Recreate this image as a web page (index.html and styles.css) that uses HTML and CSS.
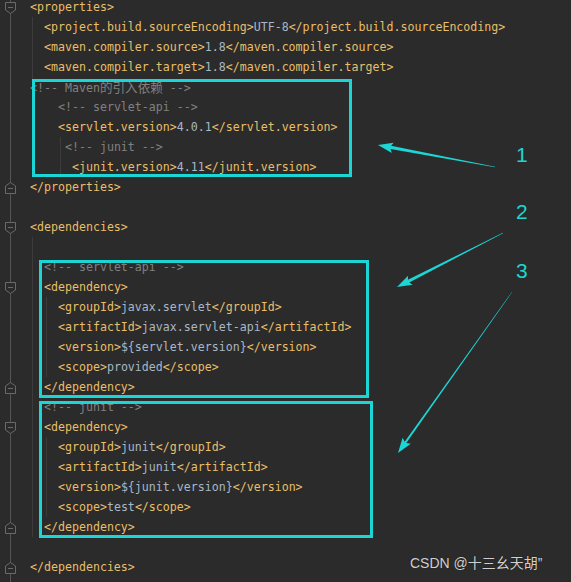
FILE: index.html
```html
<!DOCTYPE html>
<html>
<head>
<meta charset="utf-8">
<link rel="stylesheet" href="styles.css">
</head>
<body>
<div class="editor">
  <div class="row"><span class="gut"><svg class="fold" viewBox="0 0 11 12"><path d="M0.5 0.5H10.5V8L5.5 11.5L0.5 8Z"/><path d="M3 5.5H8"/></svg></span><span class="line"><span class="t">&lt;properties&gt;</span></span></div>
  <div class="block g32">
    <div class="row"><span class="gut"></span><span class="line">  <span class="t">&lt;project.build.sourceEncoding&gt;</span><span class="v">UTF-8</span><span class="t">&lt;/project.build.sourceEncoding&gt;</span></span></div>
    <div class="row"><span class="gut"></span><span class="line">  <span class="t">&lt;maven.compiler.source&gt;</span><span class="v">1.8</span><span class="t">&lt;/maven.compiler.source&gt;</span></span></div>
    <div class="row"><span class="gut"></span><span class="line">  <span class="t">&lt;maven.compiler.target&gt;</span><span class="v">1.8</span><span class="t">&lt;/maven.compiler.target&gt;</span></span></div>
    <div class="row"><span class="gut"></span><span class="line"><span class="c">&lt;!-- Maven<span class="cjk">的引入依赖</span> --&gt;</span></span></div>
    <div class="row"><span class="gut"></span><span class="line">    <span class="c">&lt;!-- servlet-api --&gt;</span></span></div>
    <div class="row"><span class="gut"></span><span class="line">    <span class="t">&lt;servlet.version&gt;</span><span class="v">4.0.1</span><span class="t">&lt;/servlet.version&gt;</span></span></div>
    <div class="block g60">
      <div class="row"><span class="gut"></span><span class="line">     <span class="c">&lt;!-- junit --&gt;</span></span></div>
      <div class="row"><span class="gut"></span><span class="line">      <span class="t">&lt;junit.version&gt;</span><span class="v">4.11</span><span class="t">&lt;/junit.version&gt;</span></span></div>
    </div>
  </div>
  <div class="row"><span class="gut"><svg class="fold" viewBox="0 0 11 12"><path d="M0.5 11.5H10.5V4L5.5 0.5L0.5 4Z"/><path d="M3 6.5H8"/></svg></span><span class="line"><span class="t">&lt;/properties&gt;</span></span></div>
  <div class="row"><span class="gut"></span><span class="line"></span></div>
  <div class="row"><span class="gut"><svg class="fold" viewBox="0 0 11 12"><path d="M0.5 0.5H10.5V8L5.5 11.5L0.5 8Z"/><path d="M3 5.5H8"/></svg></span><span class="line"><span class="t">&lt;dependencies&gt;</span></span></div>
  <div class="block g32">
    <div class="row"><span class="gut"></span><span class="line"></span></div>
    <div class="row"><span class="gut"></span><span class="line">  <span class="c">&lt;!-- servlet-api --&gt;</span></span></div>
    <div class="row"><span class="gut"><svg class="fold" viewBox="0 0 11 12"><path d="M0.5 0.5H10.5V8L5.5 11.5L0.5 8Z"/><path d="M3 5.5H8"/></svg></span><span class="line">  <span class="t">&lt;dependency&gt;</span></span></div>
    <div class="block g46">
      <div class="row"><span class="gut"></span><span class="line">    <span class="t">&lt;groupId&gt;</span><span class="v">javax.servlet</span><span class="t">&lt;/groupId&gt;</span></span></div>
      <div class="row"><span class="gut"></span><span class="line">    <span class="t">&lt;artifactId&gt;</span><span class="v">javax.servlet-api</span><span class="t">&lt;/artifactId&gt;</span></span></div>
      <div class="row"><span class="gut"></span><span class="line">    <span class="t">&lt;version&gt;</span><span class="v">${servlet.version}</span><span class="t">&lt;/version&gt;</span></span></div>
      <div class="row"><span class="gut"></span><span class="line">    <span class="t">&lt;scope&gt;</span><span class="v">provided</span><span class="t">&lt;/scope&gt;</span></span></div>
    </div>
    <div class="row"><span class="gut"><svg class="fold" viewBox="0 0 11 12"><path d="M0.5 11.5H10.5V4L5.5 0.5L0.5 4Z"/><path d="M3 6.5H8"/></svg></span><span class="line">  <span class="t">&lt;/dependency&gt;</span></span></div>
    <div class="row"><span class="gut"></span><span class="line">  <span class="c">&lt;!-- junit --&gt;</span></span></div>
    <div class="row"><span class="gut"><svg class="fold" viewBox="0 0 11 12"><path d="M0.5 0.5H10.5V8L5.5 11.5L0.5 8Z"/><path d="M3 5.5H8"/></svg></span><span class="line">  <span class="t">&lt;dependency&gt;</span></span></div>
    <div class="block g46">
      <div class="row"><span class="gut"></span><span class="line">    <span class="t">&lt;groupId&gt;</span><span class="v">junit</span><span class="t">&lt;/groupId&gt;</span></span></div>
      <div class="row"><span class="gut"></span><span class="line">    <span class="t">&lt;artifactId&gt;</span><span class="v">junit</span><span class="t">&lt;/artifactId&gt;</span></span></div>
      <div class="row"><span class="gut"></span><span class="line">    <span class="t">&lt;version&gt;</span><span class="v">${junit.version}</span><span class="t">&lt;/version&gt;</span></span></div>
      <div class="row"><span class="gut"></span><span class="line">    <span class="t">&lt;scope&gt;</span><span class="v">test</span><span class="t">&lt;/scope&gt;</span></span></div>
    </div>
    <div class="row"><span class="gut"><svg class="fold" viewBox="0 0 11 12"><path d="M0.5 11.5H10.5V4L5.5 0.5L0.5 4Z"/><path d="M3 6.5H8"/></svg></span><span class="line">  <span class="t">&lt;/dependency&gt;</span></span></div>
  </div>
  <div class="row"><span class="gut"></span><span class="line"></span></div>
  <div class="row"><span class="gut"><svg class="fold" viewBox="0 0 11 12"><path d="M0.5 11.5H10.5V4L5.5 0.5L0.5 4Z"/><path d="M3 6.5H8"/></svg></span><span class="line"><span class="t">&lt;/dependencies&gt;</span></span></div>
</div>

<div class="box box1"></div>
<div class="box box2"></div>
<div class="box box3"></div>

<div class="num n1">1</div>
<div class="num n2">2</div>
<div class="num n3">3</div>

<svg class="arrows" width="571" height="582" viewBox="0 0 571 582">
  <polygon points="495.04,166.8 391.06,145.73 393.67,142.66 378,145 391.83,152.88 390.5,149.07 494.96,167.2"/>
  <polygon points="502.91,232.82 407.9,279.76 408.09,275.73 397,287 412.63,284.65 409.26,282.44 503.09,233.18"/>
  <polygon points="511.84,291.88 404.7,441.8 402.59,437.87 398,453 410.75,443.65 406.3,443.0 512.16,292.12"/>
</svg>

<div class="watermark">CSDN @十三幺天胡”</div>
</body>
</html>
```

FILE: styles.css
```css
html, body {
  margin: 0;
  padding: 0;
  width: 571px;
  height: 582px;
  overflow: hidden;
  background: #2b2b2b;
}

body {
  position: relative;
}

.editor {
  margin-top: -3px;
  background-image: linear-gradient(to right, transparent 10px, #555555 10px, #555555 11px, transparent 11px);
  background-repeat: no-repeat;
  min-height: 590px;
  font-family: "DejaVu Sans Mono", "Liberation Mono", "Noto Sans CJK SC", monospace;
  font-size: 11.62px;
}

.row {
  display: flex;
  height: 20px;
  line-height: 20px;
}

.gut {
  width: 30px;
  flex: none;
  display: flex;
  align-items: center;
  padding-left: 5px;
  box-sizing: border-box;
}

.fold {
  width: 11px;
  height: 12px;
  display: block;
  margin-top: 1px;
}

.fold path {
  fill: #2b2b2b;
  stroke: #6a6a6a;
  stroke-width: 1;
}

.line {
  white-space: pre;
}

.t { color: #e8bf6a; }
.v { color: #a9b7c6; }
.c { color: #808080; }

.cjk {
  font-family: "Noto Sans CJK SC", sans-serif;
  font-size: 12.6px;
}

.block {
  background-repeat: no-repeat;
}

.g32 {
  background-image: linear-gradient(to right, transparent 32px, #3c3c3c 32px, #3c3c3c 33px, transparent 33px);
}

.g46 {
  background-image: linear-gradient(to right, transparent 46px, #3c3c3c 46px, #3c3c3c 47px, transparent 47px);
}

.g60 {
  background-image: linear-gradient(to right, transparent 60px, #3c3c3c 60px, #3c3c3c 61px, transparent 61px);
}

.box {
  position: absolute;
  border: 3px solid #1cd6d6;
  box-sizing: border-box;
}

.box1 { left: 32px; top: 79px; width: 320px; height: 98px; }
.box2 { left: 39px; top: 260px; width: 330px; height: 138px; }
.box3 { left: 39px; top: 401px; width: 334px; height: 137px; }

.num {
  position: absolute;
  font-family: "Liberation Sans", "Noto Sans", sans-serif;
  font-size: 21px;
  line-height: 21px;
  color: #1cd6d6;
}

.n1 { left: 516px; top: 144px; }
.n2 { left: 516px; top: 201px; }
.n3 { left: 516px; top: 260px; }

.arrows {
  position: absolute;
  left: 0;
  top: 0;
}

.arrows polygon {
  fill: #1cd6d6;
}

.watermark {
  position: absolute;
  left: 410px;
  top: 553px;
  font-family: "Liberation Sans", "Noto Sans CJK SC", sans-serif;
  font-size: 14px;
  line-height: 20px;
  color: #d0d0d0;
  text-shadow: 0 0 1px #1a1a1a;
}
```
